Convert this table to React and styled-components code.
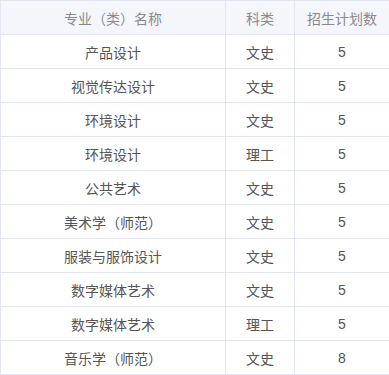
import React from 'react';
import styled, { createGlobalStyle } from 'styled-components';

const GlobalStyle = createGlobalStyle`
body{
    margin:0;
    background:#fff;
    font-family:"Noto Sans CJK SC","Noto Sans",sans-serif;
}
`;

const Table = styled.table`
width:389px;
border-collapse:collapse;
table-layout:fixed;
font-size:14px;
color:#555;
`;

const HeadCell = styled.th`
height:33px;
padding:0;
font-weight:normal;
color:#8a8a8a;
background:#f4f6fb;
border:1px solid #e3e5f0;
text-align:center;
`;

const Cell = styled.td`
height:33px;
padding:0;
border:1px solid #e3e5f0;
text-align:center;
font-family:${props => props.num ? '"Liberation Sans", Arial, sans-serif' : 'inherit'};
`;

const rows = [
    ['产品设计', '文史', 5],
    ['视觉传达设计', '文史', 5],
    ['环境设计', '文史', 5],
    ['环境设计', '理工', 5],
    ['公共艺术', '文史', 5],
    ['美术学（师范）', '文史', 5],
    ['服装与服饰设计', '文史', 5],
    ['数字媒体艺术', '文史', 5],
    ['数字媒体艺术', '理工', 5],
    ['音乐学（师范）', '文史', 8],
];

const App = () => {
    return (
        <>
            <GlobalStyle />
            <Table>
                <colgroup>
                    <col style={{ width: 225 }} />
                    <col style={{ width: 69 }} />
                    <col style={{ width: 95 }} />
                </colgroup>
                <thead>
                    <tr>
                        <HeadCell>专业（类）名称</HeadCell>
                        <HeadCell>科类</HeadCell>
                        <HeadCell>招生计划数</HeadCell>
                    </tr>
                </thead>
                <tbody>
                    {rows.map((r, i) => (
                        <tr key={i}>
                            <Cell>{r[0]}</Cell>
                            <Cell>{r[1]}</Cell>
                            <Cell num>{r[2]}</Cell>
                        </tr>
                    ))}
                </tbody>
            </Table>
        </>
    );
};

export default App;
